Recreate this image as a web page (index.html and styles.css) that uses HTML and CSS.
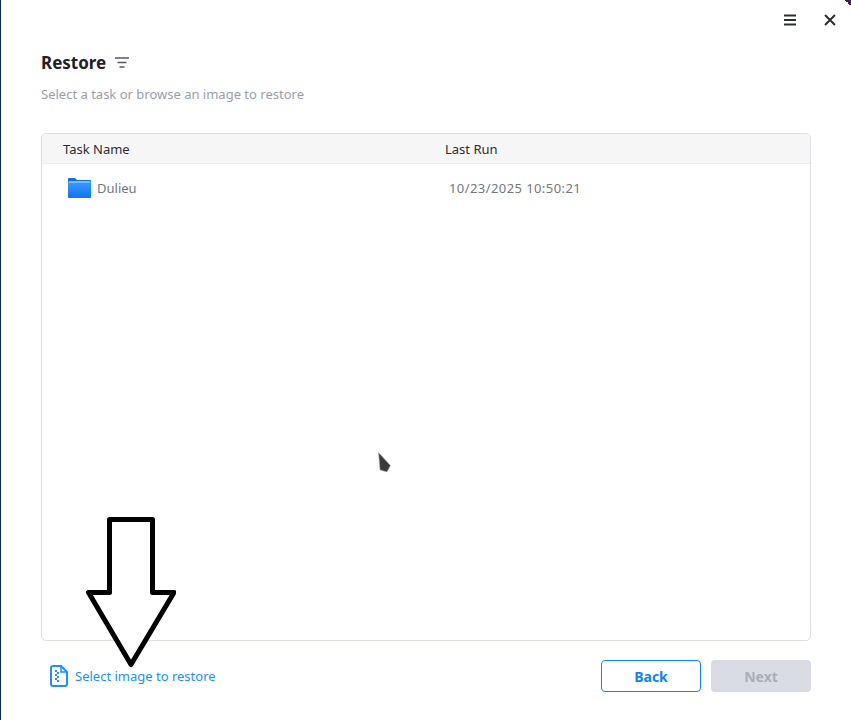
FILE: index.html
```html
<!DOCTYPE html>
<html lang="en">
<head>
  <meta charset="UTF-8">
  <meta name="viewport" content="width=device-width, initial-scale=1.0">
  <title>Restore</title>
  <link rel="stylesheet" href="styles.css">
</head>
<body>
  <div class="window">
    <div class="titlebar">
      <svg class="menu-icon" width="14" height="12" viewBox="0 0 14 12"><path d="M1 1.500h12M1 6h12M1 10.500h12" stroke="#2b2f36" stroke-width="2" fill="none"/></svg>
      <svg class="close-icon" width="12" height="12" viewBox="0 0 12 12"><path d="M1 1l10 10M11 1L1 11" stroke="#2b2f36" stroke-width="2" fill="none"/></svg>
    </div>

    <div class="heading">
      <h1>Restore</h1>
      <svg width="14" height="11" viewBox="0 0 14 11"><path d="M0 1h14M2.500 5.500h9M4.500 10h5" stroke="#55585f" stroke-width="1.500" fill="none"/></svg>
    </div>
    <p class="subtitle">Select a task or browse an image to restore</p>

    <div class="task-table">
      <div class="table-head">
        <span class="col-name">Task Name</span>
        <span class="col-run">Last Run</span>
      </div>
      <div class="table-row">
        <span class="row-name">
          <svg width="23" height="20" viewBox="0 0 23 20">
            <defs>
              <linearGradient id="folderFill" x1="0" y1="0" x2="0" y2="1">
                <stop offset="0" stop-color="#3a9dfb"/>
                <stop offset="1" stop-color="#0f74fa"/>
              </linearGradient>
            </defs>
            <path d="M0 1a1 1 0 0 1 1-1h6l2 2h13a1 1 0 0 1 1 1v2H0z" fill="#0f6fe8"/>
            <rect x="0" y="3" width="23" height="17" rx="1" fill="url(#folderFill)"/>
            <rect x="1" y="3.500" width="21" height="1" fill="#bfe0ff"/>
          </svg>
          Dulieu
        </span>
        <span class="row-run">10/23/2025 10:50:21</span>
      </div>
    </div>

    <div class="footer">
      <a class="select-link" href="#">
        <svg width="19" height="22" viewBox="0 0 19 22"><path d="M3 1h8l6 6v12a2 2 0 0 1-2 2H3a2 2 0 0 1-2-2V3a2 2 0 0 1 2-2z" fill="#fff" stroke="#1e8fff" stroke-width="2"/><path d="M11 1v6h6" fill="none" stroke="#1e8fff" stroke-width="1.500"/><path d="M5 5h2v2H5zM7 7h2v2H7zM5 9h2v2H5zM7 11h2v2H7zM5 13h2v2H5zM7 15h2v2H7z" fill="#1e8fff"/></svg>
        Select image to restore
      </a>
      <div class="buttons">
        <button class="btn-back">Back</button>
        <button class="btn-next" disabled>Next</button>
      </div>
    </div>

    <!-- annotation drawn on top of the screenshot -->
    <svg class="arrow" width="92" height="152" viewBox="0 0 92 152"><path d="M25.500 3.500h43v73h21.500L47 148.500 4.500 76.500h21z" fill="#fff" stroke="#000" stroke-width="5" stroke-linejoin="round"/></svg>
    <svg class="cursor" width="13" height="21" viewBox="0 0 13 21"><path d="M.5.500l12 13-3.500 6.500-7-2z" fill="#3a3a3a" stroke="#bbb" stroke-width="0.600"/></svg>
    <div class="corner"></div>
    <div class="edge-glow"></div>
  </div>
</body>
</html>
```

FILE: styles.css
```css
* {
  box-sizing: border-box;
}
html, body {
  margin: 0;
  height: 100%;
}
body {
  font-family: 'Noto Sans', sans-serif;
  background-color: #fff;
  color: #333;
}
.window {
  position: relative;
  width: 851px;
  height: 720px;
  padding: 0 40px 0 41px;
  border-left: 1px solid #0f2a55;
  overflow: hidden;
}
.titlebar {
  display: flex;
  justify-content: flex-end;
  align-items: center;
  gap: 27px;
  height: 40px;
  margin-right: -25px;
}
.heading {
  display: flex;
  align-items: center;
  gap: 9px;
  margin-left: -1px;
  height: 44px;
}
h1 {
  margin: 0;
  font-size: 17px;
  font-weight: 700;
  color: #1f2126;
}
.subtitle {
  margin: 0 0 0 -1px;
  height: 49px;
  padding-top: 1px;
  font-size: 13px;
  color: #9a9ea8;
}
.task-table {
  height: 508px;
  margin-left: -1px;
  border: 1px solid #dcdfe6;
  border-radius: 5px;
  overflow: hidden;
}
.table-head {
  display: flex;
  align-items: center;
  height: 30px;
  padding-left: 21px;
  background-color: #f6f6f6;
  border-bottom: 1px solid #ebedf0;
  font-size: 13px;
  color: #2b2d33;
}
.col-name {
  width: 382px;
}
.table-row {
  display: flex;
  align-items: center;
  height: 47px;
  padding-left: 26px;
  font-size: 13px;
  color: #73777f;
}
.row-name {
  display: flex;
  align-items: center;
  gap: 6px;
  width: 381px;
}
.row-run {
  letter-spacing: 0.42px;
}
.footer {
  display: flex;
  justify-content: space-between;
  align-items: center;
  margin: 19px 0 0 8px;
}
.select-link {
  display: flex;
  align-items: center;
  gap: 6px;
  font-size: 13px;
  color: #1e8fff;
  text-decoration: none;
}
.buttons {
  display: flex;
  gap: 10px;
}
.buttons button {
  width: 100px;
  height: 32px;
  border-radius: 4px;
  font-family: inherit;
  font-size: 14px;
  font-weight: 700;
}
.btn-back {
  background-color: #fff;
  border: 1px solid #0a84ff;
  color: #0a84ff;
}
.btn-next {
  background-color: #d9dde3;
  border: none;
  color: #a9adb5;
}
.arrow {
  position: absolute;
  left: 83px;
  top: 516px;
}
.cursor {
  position: absolute;
  left: 377px;
  top: 452px;
}
/* bits of the desktop showing round the window */
.corner {
  position: absolute;
  right: 0;
  top: 0;
  width: 6px;
  height: 6px;
  background: linear-gradient(to top right, transparent 50%, #4a1a5c 50%);
}
.edge-glow {
  position: absolute;
  left: -1px;
  top: 194px;
  width: 1px;
  height: 52px;
  background-color: #0a4f96;
}
```
